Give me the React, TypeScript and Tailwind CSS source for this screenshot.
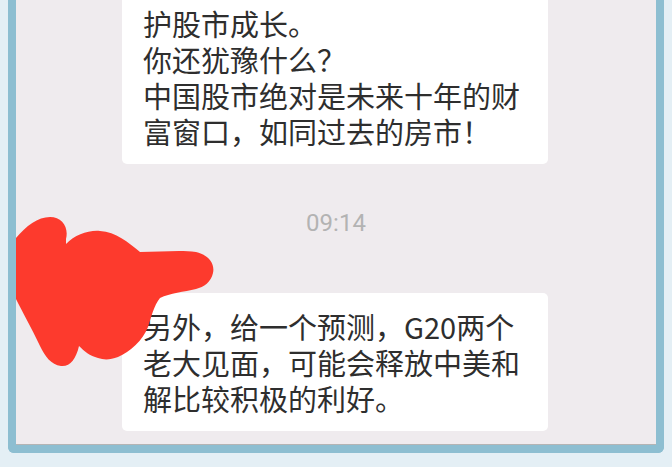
import React from "react";

const cjk = { fontFamily: '"Noto Sans CJK SC", "Noto Sans", sans-serif' };

const Bubble = ({ lines }: { lines: string[] }) => (
  <div className="ml-[106px] w-[426px] rounded-[5px] bg-white pl-[21px] pr-[20px] pt-[15px] pb-[15px]">
    {lines.map((line, i) => (
      <div key={i} className="h-[36px] whitespace-nowrap text-[29px] leading-[36px] text-[#2e2e2e]" style={cjk}>
        {line || "\u00a0"}
      </div>
    ))}
  </div>
);

// the red marker scribble that hides the avatar
const Scribble = () => (
  <svg className="absolute left-0 top-0" width="672" height="467" viewBox="0 0 672 467">
    <path
      fill="#fd3a2d"
      d="M16,238 C26,226 38,217 50,217 C62,217 69,227 66,239 L66,244 C75,235 88,230 100,231 C116,232 128,242 140,252 C160,252 180,250 196,252 C209,255 215,264 213,273 C211,282 204,287 196,289 C184,292 170,293 160,298 C154,305 151,318 148,327 C143,340 130,352 118,357 C110,360 104,360 98,358 C90,356 84,351 79,346 C76,359 70,367 61,366 C51,365 45,356 40,346 C31,327 22,311 16,299 Z"
    />
  </svg>
);

export default function App() {
  return (
    <div className="relative flex h-[467px] w-[672px] flex-col overflow-hidden bg-[#e4eff5] px-2 pb-[14px]">
      <div className="flex flex-1 flex-col overflow-hidden rounded-b-[6px] border-x-8 border-b-8 border-[#8dbed1]">
        <div className="flex flex-1 flex-col border-b border-[#b4b4b4] bg-[#efebee]">
          <div className="-mt-[46px]">
            <Bubble
              lines={[
                "",
                "护股市成长。",
                "你还犹豫什么？",
                "中国股市绝对是未来十年的财",
                "富窗口，如同过去的房市！",
              ]}
            />
          </div>
          <div
            className="mt-[47px] text-center text-[24px] leading-[24px] text-[#b3b3b3]"
            style={{ fontFamily: "Roboto, 'Liberation Sans', sans-serif" }}
          >
            09:14
          </div>
          <div className="mt-[58px]">
            <Bubble
              lines={[
                "另外，给一个预测，G20两个",
                "老大见面，可能会释放中美和",
                "解比较积极的利好。",
              ]}
            />
          </div>
        </div>
      </div>
      <Scribble />
    </div>
  );
}
